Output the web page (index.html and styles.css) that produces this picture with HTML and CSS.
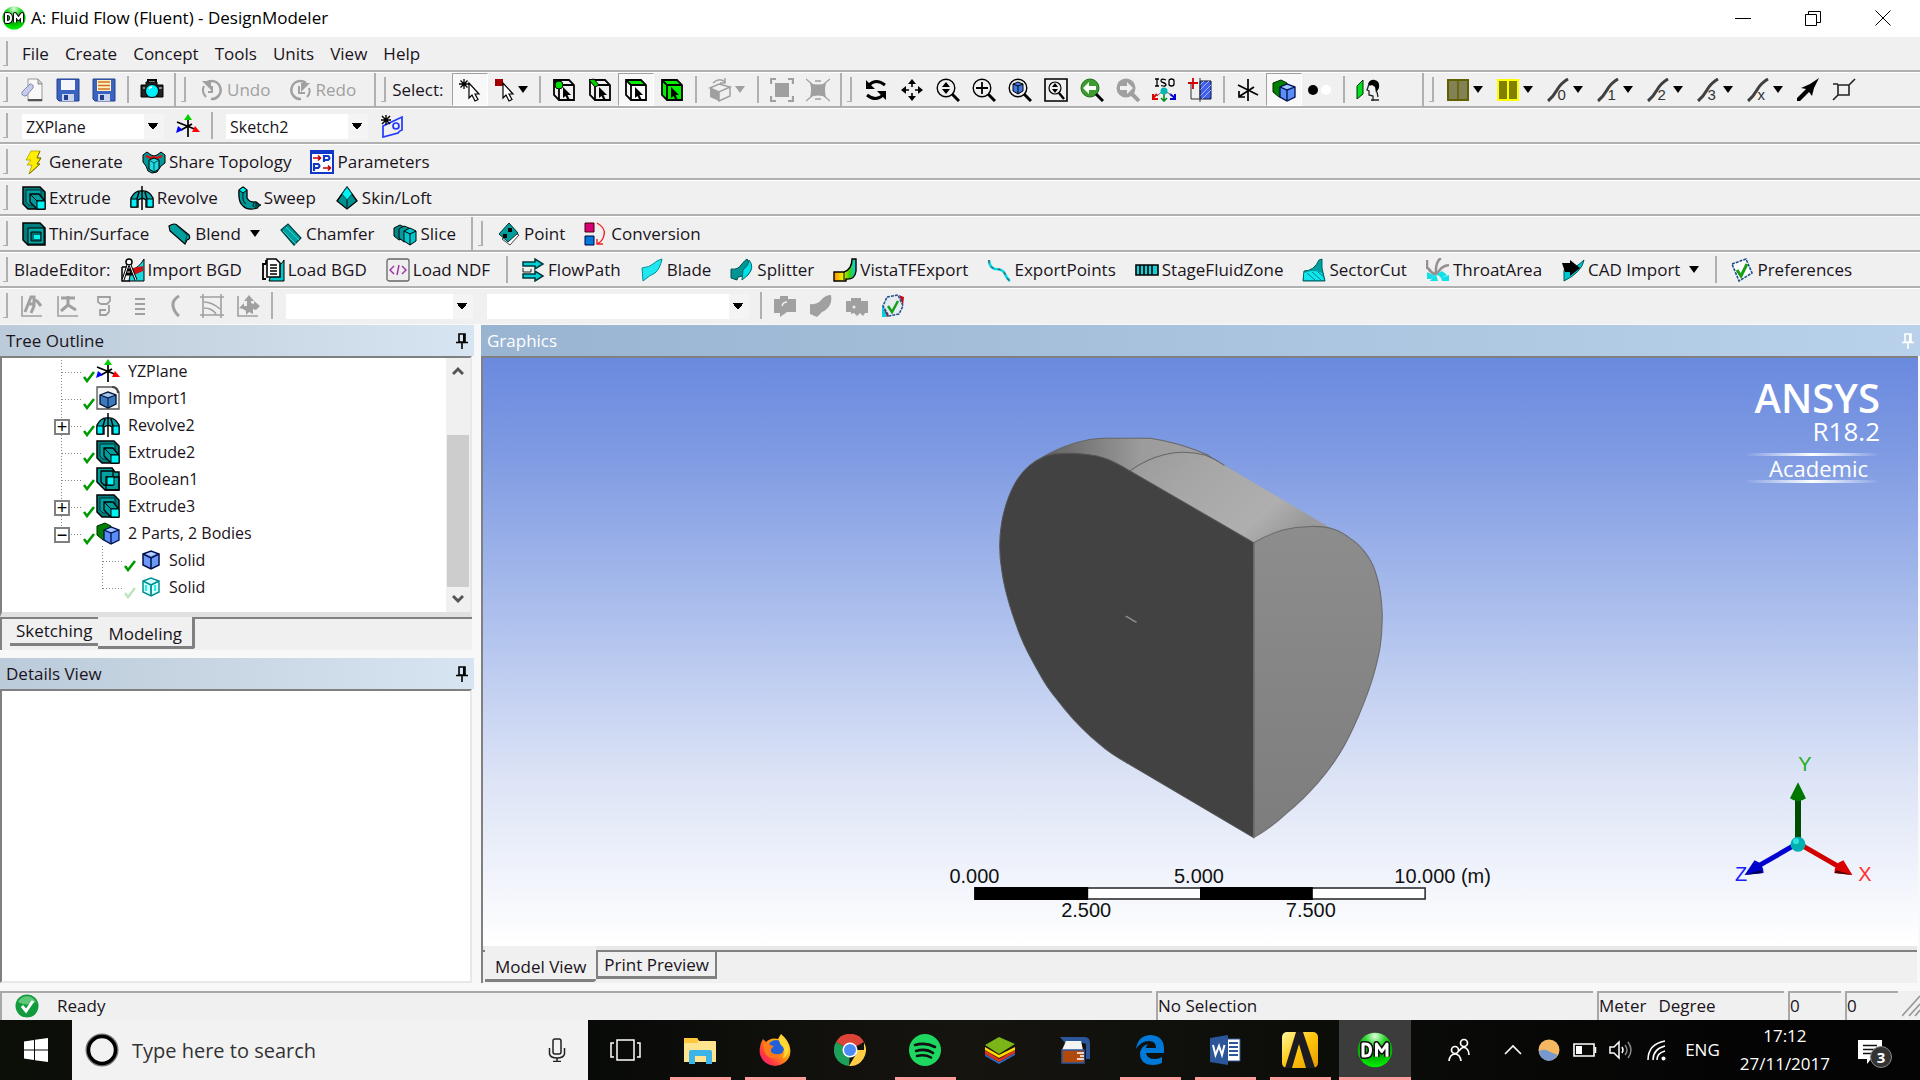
FILE: index.html
```html
<!DOCTYPE html>
<html lang="en">
<head>
<meta charset="utf-8">
<title>A: Fluid Flow (Fluent) - DesignModeler</title>
<link rel="stylesheet" href="styles.css">
</head>
<body>
<svg class="defs" aria-hidden="true">
<defs>
<radialGradient id="gGreen" cx=".5" cy=".1" r=".95"><stop offset="0" stop-color="#e0ffe0"/><stop offset=".3" stop-color="#30d830"/><stop offset=".6" stop-color="#00a800"/><stop offset="1" stop-color="#00ff00"/></radialGradient>
<linearGradient id="gTop" x1="0" y1="0" x2="1" y2=".5"><stop offset="0" stop-color="#9a9a9a"/><stop offset=".35" stop-color="#a6a6a6"/><stop offset=".8" stop-color="#afafaf"/><stop offset="1" stop-color="#9a9a9a"/></linearGradient>
<linearGradient id="gDome" x1="0" y1="0" x2="1" y2="0"><stop offset="0" stop-color="#606060"/><stop offset=".55" stop-color="#9c9c9c"/><stop offset="1" stop-color="#a2a2a2"/></linearGradient>
<linearGradient id="gSide" x1="0" y1="0" x2="0" y2="1"><stop offset="0" stop-color="#8d8d8d"/><stop offset="1" stop-color="#7d7d7d"/></linearGradient>
<linearGradient id="gFox" x1="1" y1="0" x2="0" y2="1"><stop offset="0" stop-color="#fff44f"/><stop offset=".45" stop-color="#ff980e"/><stop offset=".75" stop-color="#ff3647"/><stop offset="1" stop-color="#e31587"/></linearGradient>
<linearGradient id="gAns" x1="0" y1="0" x2="1" y2="1"><stop offset="0" stop-color="#fff9a0"/><stop offset=".5" stop-color="#ffc40c"/><stop offset="1" stop-color="#e89a00"/></linearGradient>
<linearGradient id="gVista" x1="0" y1="0" x2="1" y2="0"><stop offset="0" stop-color="#ff9000"/><stop offset=".4" stop-color="#f0f000"/><stop offset=".7" stop-color="#40d000"/><stop offset="1" stop-color="#00d0ff"/></linearGradient>
</defs>
<symbol id="dm" viewBox="0 0 24 24"><circle cx="12" cy="12" r="11.500" fill="url(#gGreen)"/><g fill="none" stroke-linejoin="round"><path d="M4 8v8h1.500q3.500 0 3.500-4T5.500 8zM13 16.500V8l3.500 5L20 8v8.500" stroke="#111" stroke-width="4"/><path d="M4 8v8h1.500q3.500 0 3.500-4T5.500 8zM13 16.500V8l3.500 5L20 8v8.500" stroke="#fff" stroke-width="2"/></g></symbol>
<symbol id="new" viewBox="0 0 24 24"><path d="M8 1h10l4 4v18H8z" fill="#f8f8f8" stroke="#999"/><path d="M18 1v5h4" fill="#ccc" stroke="#888"/><path d="M2 14L10 6q4 0 3 4L6 18q-5 0-4-4z" fill="#c5cdea" stroke="#8088b0"/><path d="M8 22h14" stroke="#555" stroke-width="2"/></symbol>
<symbol id="save" viewBox="0 0 24 24"><path d="M1 1h22v22H3l-2-2z" fill="#3a62c0" stroke="#223f8c"/><path d="M5 2h14v10H5z" fill="#f4f6fc"/><path d="M6 16h12v7H6z" fill="#c9d3ea"/><path d="M8 17h4v5H8z" fill="#223f8c"/></symbol>
<symbol id="saveas" viewBox="0 0 24 24"><path d="M1 1h22v22H3l-2-2z" fill="#3a62c0" stroke="#223f8c"/><path d="M5 2h14v11H5z" fill="#fff0c0"/><path d="M6 4h12M6 7.500h12M6 11h12" stroke="#d07020" stroke-width="1.500"/><path d="M6 16h12v7H6z" fill="#c9d3ea"/><path d="M8 17h4v5H8z" fill="#223f8c"/></symbol>
<symbol id="camera" viewBox="0 0 24 24"><path d="M1 7h5V4h11v3h6v12H1z" fill="#222" stroke="#000"/><path d="M8 4V2h8v2" fill="none" stroke="#000" stroke-width="2"/><circle cx="12" cy="13" r="6.500" fill="#00f0ff" stroke="#000"/><path d="M9 11q1-2 3-2" stroke="#fff" stroke-width="1.500" fill="none"/><path d="M3 10h2M19 10h3" stroke="#eee"/></symbol>
<symbol id="undo" viewBox="0 0 24 24"><path d="M6 5a9 9 0 1 1 5 16" fill="none" stroke="#a0a0a0" stroke-width="2.500"/><path d="M2 3h9v9z" fill="#a0a0a0"/><path d="M4 8q-3 6 2 11M12 8v6H8" fill="none" stroke="#a0a0a0" stroke-width="2"/></symbol>
<symbol id="redo" viewBox="0 0 24 24"><path d="M18 5a9 9 0 1 0-5 16" fill="none" stroke="#a0a0a0" stroke-width="2.500"/><path d="M22 5h-9v9z" fill="#a0a0a0"/><path d="M21 10q2 5-2 9M11 8v7h6" fill="none" stroke="#a0a0a0" stroke-width="2"/></symbol>
<symbol id="selnew" viewBox="0 0 24 24"><path d="M6 1v10M1 6h10M2.500 2.500l7 7M9.500 2.500l-7 7" stroke="#000" stroke-width="1.300"/><path d="M11 5v15l3-3 3 6 3-1.500-3-5.500h4z" fill="#fff" stroke="#000" stroke-width="1.200"/></symbol>
<symbol id="selmode" viewBox="0 0 24 24"><path d="M1 1h8v7H1z" fill="#a00000"/><path d="M9 5v15l3-3 3 6 3-1.500-3-5.500h4z" fill="#fff" stroke="#000" stroke-width="1.200"/></symbol>
<symbol id="cubeb" viewBox="0 0 24 24"><path d="M2 2h15l5 5v15H7l-5-5zM2 2l5 5v15M7 7h15" fill="none" stroke="#000" stroke-width="1.800"/></symbol>
<symbol id="cur" viewBox="0 0 24 24"><path d="M11 9v11l2.500-2 2 4 2-1-2-4H19z" fill="#000"/></symbol>
<symbol id="selpt" viewBox="0 0 24 24"><use href="#cubeb"/><circle cx="7" cy="7" r="4" fill="#00e000" stroke="#000"/><use href="#cur"/></symbol>
<symbol id="seledge" viewBox="0 0 24 24"><use href="#cubeb"/><path d="M1 2l5-1 5 6-4 2z" fill="#00d000" stroke="#000"/><use href="#cur"/></symbol>
<symbol id="selface" viewBox="0 0 24 24"><path d="M7 7h15v15H7z" fill="#fff"/><path d="M2 2h15l5 5H7z" fill="#00f000"/><use href="#cubeb"/><use href="#cur"/></symbol>
<symbol id="selbody" viewBox="0 0 24 24"><path d="M2 2h15l5 5v15H7l-5-5z" fill="#00f000"/><use href="#cubeb"/><use href="#cur"/></symbol>
<symbol id="extsel" viewBox="0 0 24 24"><path d="M2 10l9 4v9l-9-4z" fill="#a0a0a0"/><path d="M2 10l9-4 11 3-11 5zM11 14v9l11-5V9M5 5q6-6 12-1M17 0v5h-5" fill="none" stroke="#a0a0a0" stroke-width="1.500"/></symbol>
<symbol id="expand" viewBox="0 0 24 24"><path d="M5 5h14v14H5z" fill="#a0a0a0"/><path d="M1 6V1h5M18 1h5v5M23 18v5h-5M6 23H1v-5" fill="none" stroke="#a0a0a0" stroke-width="2.200"/></symbol>
<symbol id="shrink" viewBox="0 0 24 24"><path d="M4 5q8 3 16 0-2 7 0 14-8-3-16 0 2-7 0-14z" fill="#a0a0a0"/><path d="M0 1l6 5M24 1l-6 5M0 23l6-5M24 23l-6-5M9 3h6M9 21h6" stroke="#a0a0a0" stroke-width="1.300"/></symbol>
<symbol id="rotate" viewBox="0 0 24 24"><path d="M5 7q7-7 16 0M19 17Q12 24 3 17" fill="none" stroke="#000" stroke-width="3"/><path d="M2 2v9h9zM22 22v-9h-9z"/></symbol>
<symbol id="pan" viewBox="0 0 24 24"><path d="M12 3v6M12 15v6M3 12h6M15 12h6" stroke="#000" stroke-width="1.600"/><path d="M12 1l4 5H8zM12 23l4-5H8zM1 12l5-4v8zM23 12l-5-4v8z"/></symbol>
<symbol id="mag" viewBox="0 0 24 24"><circle cx="10" cy="10" r="8.800" fill="none" stroke="#000" stroke-width="1.400"/><path d="M16 16l7 7" stroke="#000" stroke-width="3"/></symbol>
<symbol id="zoom" viewBox="0 0 24 24"><use href="#mag"/><path d="M10 4l4 5H6zM10 16l4-5H6z"/></symbol>
<symbol id="boxzoom" viewBox="0 0 24 24"><use href="#mag"/><path d="M10 4v12M4 10h12" stroke="#000" stroke-width="1.800"/></symbol>
<symbol id="fit" viewBox="0 0 24 24"><use href="#mag"/><path d="M5 6l5-2 5 2v7l-5 3-5-3z" fill="#3c78e0" stroke="#000"/><path d="M5 6l5 2 5-2M10 8v8" fill="none" stroke="#000"/></symbol>
<symbol id="magwin" viewBox="0 0 24 24"><path d="M1 1h22v22H1z" fill="none" stroke="#000" stroke-width="1.600"/><circle cx="11" cy="10" r="6" fill="none" stroke="#000" stroke-width="1.200"/><path d="M15 15l5 6" stroke="#000" stroke-width="2.500"/><path d="M11 5l3 4H8zM11 15l3-4H8z"/></symbol>
<symbol id="prev" viewBox="0 0 24 24"><circle cx="10" cy="10" r="9" fill="#3c9c30" stroke="#1c6c18"/><path d="M16 16l7 7" stroke="#000" stroke-width="3"/><path d="M3 10l6-6v4h7v4H9v4z" fill="#fff"/></symbol>
<symbol id="next" viewBox="0 0 24 24"><circle cx="10" cy="10" r="9.500" fill="#a0a0a0"/><path d="M16 16l7 7" stroke="#a0a0a0" stroke-width="4"/><path d="M17 10l-6-6v4H4v4h7v4z" fill="#f0f0f0"/></symbol>
<symbol id="iso" viewBox="0 0 24 24"><path d="M3 1h4M5 1v7M3 8h4M14 2q-5-2-5 1 0 1 2 1.500t3 2q0 2.500-5 1M17 3q0-2 2.500-2T22 3v3q0 2-2.500 2T17 6z" fill="none" stroke="#000" stroke-width="1.300"/><path d="M12 14v8M9 20l3 3 3-3" stroke="#009020" stroke-width="1.600" fill="none"/><path d="M1 20l4-4M1 16v5h5" stroke="#d00" stroke-width="2" fill="none"/><path d="M23 20l-5-4M23 16v5h-5" stroke="#00c" stroke-width="2" fill="none"/><path d="M5 18q3-3 5-4M14 14q3 1 5 3" fill="none" stroke="#555"/><circle cx="12" cy="13" r="3.500" fill="#00b8b8"/></symbol>
<symbol id="lookat" viewBox="0 0 24 24"><path d="M12 3h11v18H12z" fill="#4060f0" stroke="#112" /><path d="M12 12l9-9M12 18L23 7M14 21l9-9M12 7l4-4" stroke="#a8b8ff"/><path d="M3 6v15h9M12 0v24" fill="none" stroke="#333"/><path d="M0 5h10M5 0v11" stroke="#d00000" stroke-width="1.800"/></symbol>
<symbol id="axes" viewBox="0 0 24 24"><path d="M12 1v22M2 7l20 10M18 9L4 18M3 13v6h6" fill="none" stroke="#000" stroke-width="1.700"/></symbol>
<symbol id="parts" viewBox="0 0 24 24"><path d="M1 5l8-3 6 3v12l-8 2-6-5z" fill="#008000" stroke="#002800"/><path d="M8 9l7-3 8 3v10l-8 4-7-4z" fill="#5c8cf8" stroke="#001048" stroke-width="1.300"/><path d="M8 9l7 3 8-3M15 12v11" fill="none" stroke="#001048" stroke-width="1.300"/><path d="M10 9l5-2 5 2-5 2z" fill="#a8c8ff"/></symbol>
<symbol id="points" viewBox="0 0 24 24"><circle cx="5" cy="12" r="5"/><circle cx="18" cy="12" r="5" fill="#fff"/></symbol>
<symbol id="look" viewBox="0 0 24 24"><path d="M1 8l6-6v14l-6 5z" fill="#00e020" stroke="#030"/><path d="M12 6q2-5 7-4 5 1 4 8l-3 5-1-6-3-2q-3 1-3 0z"/><path d="M13 6l-2 6 2 1v4l4 1v5M21 14l1 5M23 22h-8" fill="none" stroke="#222" stroke-width="1.300"/></symbol>
<symbol id="olive" viewBox="0 0 24 24"><path d="M2 2h20v20H2z" fill="#828255" stroke="#606000" stroke-width="2"/><path d="M12 2v20" stroke="#606000" stroke-width="1.500"/></symbol>
<symbol id="yellow" viewBox="0 0 24 24"><path d="M2 2h20v20H2z" fill="#808000" stroke="#ffff00" stroke-width="2"/><path d="M12 2v20" stroke="#ffff00" stroke-width="2"/></symbol>
<symbol id="slash" viewBox="0 0 24 24"><path d="M2 23Q7 19 11 12T22 1" fill="none" stroke="#404040" stroke-width="3"/></symbol>
<symbol id="arrow" viewBox="0 0 24 24"><path d="M1 20l9-9-5-1 9-4 9-6-5 10-2 8-3-4-9 9H1z"/></symbol>
<symbol id="vertex" viewBox="0 0 24 24"><path d="M6 7h11v10H6zM17 7l6-6M6 17l-5 5M1 6h5" fill="none" stroke="#222" stroke-width="1.600"/></symbol>
<symbol id="plane" viewBox="0 0 24 24"><path d="M12 3v20M1 8l20 8M16 10L5 16" stroke="#000" stroke-width="1.700"/><path d="M12 0l4 6H8z" fill="#00d000"/><path d="M24 18h-8l3-6z" fill="#f00"/><path d="M0 19l2-7 5 4z" fill="#00f"/></symbol>
<symbol id="sketch" viewBox="0 0 24 24"><path d="M3 12l19-9v13q-3 1-4 3L3 23z" fill="none" stroke="#2038ff" stroke-width="1.700"/><circle cx="16" cy="12" r="3" fill="none" stroke="#2038ff" stroke-width="1.700"/><path d="M6 1v10M1 6h10M2 2l8 8M10 2l-8 8" stroke="#000" stroke-width="1.400"/></symbol>
<symbol id="bolt" viewBox="0 0 24 24"><path d="M9 1h9l-3 7h4l-4 6h3L7 24l3-9H5l4-5H4z" fill="#ffee00" stroke="#b0a000" stroke-width=".8"/><path d="M18 1l-3 7h4l-4 6h3L7 24" fill="none" stroke="#777000"/></symbol>
<symbol id="share" viewBox="0 0 24 24"><path d="M1 5l4-3 4 3 3 1 3-1 4-3 4 3v8l-4 3-4 6-5 1-4-2-2-5-3-4z" fill="#009898" stroke="#000"/><path d="M4 6l5 2 3-1 3 1 5-2" stroke="#f00000" stroke-width="2" fill="none"/><path d="M7 10l5-2 5 2v9l-5 3-5-3z" fill="#20d8e0" stroke="#000"/><path d="M7 10l5 3 5-3M12 13v9" fill="none" stroke="#005050"/></symbol>
<symbol id="param" viewBox="0 0 24 24"><path d="M1 1h22v22H1z" fill="#fff" stroke="#1038c8" stroke-width="2"/><path d="M1 3h22" stroke="#1038c8" stroke-width="2"/><path d="M14 12V6h4q3 2 0 4h-4M4 21v-7h4q3 2 0 4H4" fill="none" stroke="#1038c8" stroke-width="2.200"/><path d="M3 8h7M8 5.500L10.500 8 8 10.500M13 18h7M18 15.500l2.500 2.500-2.500 2.500" fill="none" stroke="#c00000" stroke-width="1.600"/></symbol>
<symbol id="extrude" viewBox="0 0 24 24"><path d="M1 1h17l5 5v17H6l-5-5z" fill="#007c7c" stroke="#000" stroke-width="1.500"/><path d="M4 4h15v15H7l-3-3z" fill="#00a0a0" stroke="#003030"/><path d="M8 8h9l5 6v9h-7l-7-7z" fill="#009c9c" stroke="#000" stroke-width="1.300"/><path d="M8 8l7 7h7" fill="none" stroke="#000"/><path d="M15 15h8v8h-8z" fill="#00f4f4" stroke="#000"/></symbol>
<symbol id="revolve" viewBox="0 0 24 24"><path d="M1 21v-9q4-8 11-7 7-1 11 7v9h-7v-7q-3-3-8 0v7z" fill="#00a8b0" stroke="#000" stroke-width="1.400"/><path d="M1 13h6v8H1zM17 13h6v8h-6z" fill="#00f0f8" stroke="#000"/><path d="M7 13l2-7M17 13l-2-7M12 0v24" stroke="#000" stroke-width="1.500"/></symbol>
<symbol id="sweep" viewBox="0 0 24 24"><path d="M2 4l4-3 4 3v8q3 5 9 4l4 3-3 3q-9 3-14-2-5-4-4-16z" fill="#009c9c" stroke="#000" stroke-width="1.300"/><path d="M2 4l4-3 4 3-4 3z" fill="#00f0f0" stroke="#000"/><path d="M6 7q-1 9 3 11M17 16l3 2v4l-4-2zM18 19h6" fill="none" stroke="#003838" stroke-width="1.300"/></symbol>
<symbol id="skin" viewBox="0 0 24 24"><path d="M12 1l5 7 5 7-10 8L2 15l5-7z" fill="#009090" stroke="#000" stroke-width="1.300"/><path d="M12 1l5 7-5 6-5-6z" fill="#00f4f4" stroke="#005050"/><path d="M12 14v9" stroke="#003030" stroke-width="1.300"/></symbol>
<symbol id="thin" viewBox="0 0 24 24"><path d="M1 1h17l5 5v17H6l-5-5z" fill="#007c7c" stroke="#000" stroke-width="1.500"/><path d="M6 6h16v16H6z" fill="#00a8a8" stroke="#000"/><path d="M9 10h10v9H9z" fill="#006c6c" stroke="#000"/><path d="M12 13h6v4h-6z" fill="#00f4f4"/></symbol>
<symbol id="blend" viewBox="0 0 24 24"><path d="M1 4q6-4 9 0l11 9q2 4-2 5l-2 4L2 9z" fill="#00a0a0" stroke="#000" stroke-width="1.200"/><path d="M8 3l11 10-2 8" fill="none" stroke="#004848"/></symbol>
<symbol id="chamfer" viewBox="0 0 24 24"><path d="M2 8l7-6 13 14-7 7z" fill="#00a0a0" stroke="#004040" stroke-width="1.200"/><path d="M4 9l13 13M7 5l13 13" stroke="#30d0d0"/></symbol>
<symbol id="slice" viewBox="0 0 24 24"><path d="M1 6l6-3 4 2v11l-5 2-5-4z" fill="#008888" stroke="#000"/><path d="M6 7l5-3 5 2v12l-5 2-5-4z" fill="#009c9c" stroke="#000"/><path d="M11 9l6-3 6 3v10l-6 4-6-4z" fill="#00c8d0" stroke="#000"/><path d="M11 9l6 3 6-3M17 12v11" fill="none" stroke="#000"/></symbol>
<symbol id="point" viewBox="0 0 24 24"><path d="M13 23l-8-6 10-7 7 3z" fill="#fff" stroke="#444"/><path d="M12 1l9 10-10 9L2 12z" fill="#009c9c" stroke="#003030"/><path d="M11 6h4v4h-4zM6 12h4v4H6z"/></symbol>
<symbol id="conv" viewBox="0 0 24 24"><path d="M1 1h9v9H1z" fill="#d80078" stroke="#400"/><path d="M1 14h9v9H1z" fill="#0078d8" stroke="#004"/><path d="M13 1q9 5 7 12-1 6-7 9M13 17v5h6" fill="none" stroke="#f02020" stroke-width="1.400"/></symbol>
<symbol id="blade" viewBox="0 0 24 24"><path d="M2 10q8-1 11-4 4-4 9-5-2 10-7 14-5 2-12 8z" fill="#20e8f0" stroke="#009098"/></symbol>
<symbol id="impbgd" viewBox="0 0 24 24"><path d="M10 12Q18 10 23 1v22H8z" fill="#18d8e0" stroke="#000"/><path d="M12 10l10-2v5l-9 4z" fill="#d01010"/><path d="M1 9h4M1 9v14h8" stroke="#000" stroke-width="1.500" fill="none"/><circle cx="8" cy="4" r="3" fill="#fff" stroke="#000" stroke-width="1.500"/><path d="M7 7L2 22M9 7l6 15M4 16h9M5 12h7" stroke="#000" stroke-width="3"/><path d="M7 7L2 22M9 7l6 15" stroke="#fff" stroke-width="1"/></symbol>
<symbol id="loadbgd" viewBox="0 0 24 24"><path d="M12 10Q20 8 23 2v21H8z" fill="#00c8c8" stroke="#000"/><path d="M5 6H2v15h3M5 2v4" fill="none" stroke="#000" stroke-width="1.800"/><path d="M6 1h9l4 4v14H6z" fill="#fff" stroke="#000" stroke-width="1.600"/><path d="M9 7h7M9 10h7M9 13h7M9 16h7" stroke="#000" stroke-width="1.300"/></symbol>
<symbol id="ndf" viewBox="0 0 24 24"><rect x="1" y="1" width="22" height="22" rx="2" fill="#eee" stroke="#666" stroke-width="1.300"/><path d="M8 8l-4 4 4 4M16 8l4 4-4 4M13 7l-2 10" fill="none" stroke="#a030a0" stroke-width="1.400"/></symbol>
<symbol id="flow" viewBox="0 0 24 24"><path d="M2 4h12V1l8 5-8 5V8H2zM2 16h12v-3l8 5-8 5v-3H2z" fill="#00d0d8" stroke="#003838" stroke-width="1.500"/><path d="M2 10v4h8v-3" fill="none" stroke="#222"/></symbol>
<symbol id="splitter" viewBox="0 0 24 24"><path d="M1 11q7 1 10-4 4-5 6-6 6 8-4 17l-5 1-1 3-6-2z" fill="#009494" stroke="#005050"/><path d="M13 12q6-5 6-10 6 7-1 15l-6 5z" fill="#00e0e8" stroke="#006868"/></symbol>
<symbol id="vista" viewBox="0 0 24 24"><path d="M1 14h10q8-3 8-13h4v12q-1 9-10 8v2H1z" fill="url(#gVista)" stroke="#000" stroke-width="1.400"/><path d="M11 14v8" stroke="#000"/></symbol>
<symbol id="exppts" viewBox="0 0 24 24"><path d="M2 2q0 7 6 9 8 0 10 5t5 7" fill="none" stroke="#00d8e8" stroke-width="2.600"/><path d="M2 2q0 7 6 9 8 0 10 5t5 7" fill="none" stroke="#555" stroke-width="1.300" stroke-dasharray="3 4"/></symbol>
<symbol id="stage" viewBox="0 0 24 24"><path d="M1 7h22v10H1z" fill="#18d0d8" stroke="#000" stroke-width="1.600"/><path d="M5 7v10M9 7v10M13 7v10M17 7v10" stroke="#000" stroke-width="1.600"/></symbol>
<symbol id="sector" viewBox="0 0 24 24"><path d="M2 13q10 0 15-11l3-1v9l3 13H1z" fill="#00a0a0" stroke="#006060"/><path d="M2 15q9-4 18 0l2 7H2z" fill="#10e8f0"/><path d="M5 15l8 7M10 14l9 8M16 14l6 5" stroke="#008080"/></symbol>
<symbol id="throat" viewBox="0 0 24 24"><path d="M1 2v9M2 10q3 5 8 7M15 0q-6 4-5 17M23 7q-9 1-12 10" fill="none" stroke="#989090" stroke-width="2.600"/><path d="M9 18L1 14v7h4zM4 23l6-7 2 7zM11 16l5-3 5 4-6 3zM15 20l8-3v6h-7z" fill="#10e0e8"/></symbol>
<symbol id="cad" viewBox="0 0 24 24"><path d="M3 12q10 0 20-10-2 12-20 21z" fill="#00c8d0" stroke="#005858"/><path d="M1 5h8V2l10 8-10 8v-4H4z"/></symbol>
<symbol id="pref" viewBox="0 0 24 24"><path d="M2 6l14-5 6 14-13 8z" fill="#fff" stroke="#20508c" stroke-width="1.600" stroke-dasharray="3 1"/><path d="M7 12l4 6 6-12" fill="none" stroke="#18a018" stroke-width="3"/></symbol>
<symbol id="pref2" viewBox="0 0 24 24"><path d="M1 13l5 10 4-2zM18 1l5 2-1 9z" fill="#c01020"/><path d="M1 10v13h5z" fill="#00d0e0"/><path d="M6 3l11-2 5 11-4 8-10 2-6-10z" fill="#e4ecf0" stroke="#20508c" stroke-width="1.500" stroke-dasharray="3 1"/><path d="M7 12l4 6 6-11" fill="none" stroke="#18a018" stroke-width="2.500"/></symbol>
<symbol id="g1" viewBox="0 0 24 24"><path d="M2 2v20h20" fill="none" stroke="#a0a0a0" stroke-width="1.600"/><path d="M5 18L11 3h3v9l-3 7M14 6l3 1 4 5M8 10h6" fill="none" stroke="#a0a0a0" stroke-width="3"/></symbol>
<symbol id="g2" viewBox="0 0 24 24"><path d="M2 2v20h20" fill="none" stroke="#a0a0a0" stroke-width="1.600"/><path d="M5 4h14M12 2v9l-7 6M12 11l8 5" fill="none" stroke="#a0a0a0" stroke-width="3"/></symbol>
<symbol id="g3" viewBox="0 0 24 24"><path d="M6 3h12v4l-3 3H9L6 8zM17 11v7l-3 3H8v-5h6" fill="none" stroke="#a0a0a0" stroke-width="1.800"/></symbol>
<symbol id="g4" viewBox="0 0 24 24"><path d="M7 5h10M7 10h10M7 15h10M7 20h10" stroke="#a0a0a0" stroke-width="1.800"/></symbol>
<symbol id="g5" viewBox="0 0 24 24"><path d="M15 2Q8 6 9 12t6 10" fill="none" stroke="#a0a0a0" stroke-width="3"/></symbol>
<symbol id="g6" viewBox="0 0 24 24"><path d="M3 0v24M21 0v24M0 3h24M0 21h24M4 8q8 0 16 7M4 14q8 0 12 6" fill="none" stroke="#a0a0a0" stroke-width="1.600"/></symbol>
<symbol id="g7" viewBox="0 0 24 24"><path d="M2 2v20h20" fill="none" stroke="#a0a0a0" stroke-width="1.600"/><path d="M3 14l5-5v3h3V7H8l5-6 5 6h-3v2l3 1V7l6 5-4 4-3-1v5l-4-2-3 3v-4l-3-2z" fill="#a0a0a0"/></symbol>
<symbol id="g8" viewBox="0 0 24 24"><path d="M1 5h6V2h8v3h8v13h-9l-7 5v-4H1z" fill="#a0a0a0"/><path d="M9 12q1-4 5-4" stroke="#eee" stroke-width="1.500" fill="none"/></symbol>
<symbol id="g9" viewBox="0 0 24 24"><path d="M1 10q8 1 12-5 4-4 9-4 2 12-9 17l-5 5-7-3z" fill="#a0a0a0"/></symbol>
<symbol id="g10" viewBox="0 0 24 24"><path d="M1 7h5V4h10v3h7v12h-3l-2 3-3-3-3 3-3-3-3 1v-2H1z" fill="#a0a0a0"/><circle cx="9" cy="13" r="1.500" fill="#eee"/></symbol>
<symbol id="import" viewBox="0 0 24 24"><path d="M1 1h17l5 5v17H1z" fill="#f4f4f4" stroke="#555" stroke-width="1.300"/><path d="M4 9l8-3 8 3v9l-8 4-8-4z" fill="#3c78c0" stroke="#001030" stroke-width="1.300"/><path d="M4 9l8 3 8-3M12 12v10" fill="none" stroke="#001030"/><path d="M6 9l6-2 6 2-6 2z" fill="#a8c8e8"/><path d="M16 1q6 0 6 6" fill="none" stroke="#444" stroke-width="2"/></symbol>
<symbol id="bool" viewBox="0 0 24 24"><path d="M1 1h15l3 4h4v18H9l-8-8z" fill="#00a0a0" stroke="#000" stroke-width="1.500"/><path d="M5 4h12v14H8l-3-3zM10 10h13v13H10z" fill="none" stroke="#000" stroke-width="1.300"/><path d="M11 10h7v8h-7z" fill="#00f4f4" stroke="#000"/></symbol>
<symbol id="solid" viewBox="0 0 24 24"><path d="M6 6l8-3 8 3v11l-8 4-8-4z" fill="#6c98f8" stroke="#001048" stroke-width="1.500"/><path d="M6 6l8 4 8-4M14 10v11" fill="none" stroke="#001048" stroke-width="1.500"/><path d="M9 6l5-2 5 2-5 2z" fill="#b8d0ff"/></symbol>
<symbol id="solid2" viewBox="0 0 24 24"><path d="M6 6l8-3 8 3v11l-8 4-8-4z" fill="#d8ffff" stroke="#009090" stroke-width="1.500"/><path d="M6 6l8 4 8-4M14 10v11" fill="none" stroke="#009090" stroke-width="1.800"/><path d="M9 10v6M18 10v6" stroke="#20f0f0" stroke-width="2"/></symbol>
<symbol id="tick" viewBox="0 0 12 14"><path d="M1 8l3 4 7-9" fill="none" stroke="#009a00" stroke-width="2.600"/></symbol>
<symbol id="pin" viewBox="0 0 12 16"><path d="M3 1h6v8H3zM0 9.500h12M6 9.500V16" fill="none" stroke="currentColor" stroke-width="1.600"/><path d="M7 1h2v8H7z" fill="currentColor"/></symbol>
</svg>

<header class="title">
  <svg class="app" aria-hidden="true"><use href="#dm"/></svg>
  <h1>A: Fluid Flow (Fluent) - DesignModeler</h1>
  <div class="winbtns">
    <button aria-label="Minimize"><svg viewBox="0 0 16 16"><path d="M0 8.500h16"/></svg></button>
    <button aria-label="Restore"><svg viewBox="0 0 16 16"><path d="M.5 4.500h11v11H.5zM3.500 4V1.500h12v11H12"/></svg></button>
    <button aria-label="Close"><svg viewBox="0 0 16 16"><path d="M.5.5l15 15M15.500.5l-15 15"/></svg></button>
  </div>
</header>

<nav class="bar menu"><div class="group">
  <button>File</button><button>Create</button><button>Concept</button><button>Tools</button><button>Units</button><button>View</button><button>Help</button>
</div></nav>

<div class="bar">
  <div class="group">
    <button class="ib" aria-label="New"><svg><use href="#new"/></svg></button><button class="ib" aria-label="Save"><svg><use href="#save"/></svg></button><button class="ib" aria-label="Save as"><svg><use href="#saveas"/></svg></button><i class="sep"></i><button class="ib" aria-label="Capture"><svg><use href="#camera"/></svg></button>
  </div>
  <div class="group history">
    <button class="tb off" disabled><svg><use href="#undo"/></svg>Undo</button><button class="tb off" disabled><svg><use href="#redo"/></svg>Redo</button>
  </div>
  <div class="group">
    <span class="lead">Select:</span>
    <button class="ib on" aria-label="New selection"><svg><use href="#selnew"/></svg></button><button class="ib dd tight" aria-label="Selection mode"><svg><use href="#selmode"/></svg><i class="caret"></i></button><i class="sep"></i><button class="ib" aria-label="Points"><svg><use href="#selpt"/></svg></button><button class="ib" aria-label="Edges"><svg><use href="#seledge"/></svg></button><button class="ib on" aria-label="Faces"><svg><use href="#selface"/></svg></button><button class="ib" aria-label="Bodies"><svg><use href="#selbody"/></svg></button><i class="sep"></i><button class="ib dd off" disabled aria-label="Extend selection"><svg><use href="#extsel"/></svg><i class="caret"></i></button><i class="sep"></i><button class="ib" disabled aria-label="Expand"><svg><use href="#expand"/></svg></button><button class="ib" disabled aria-label="Shrink"><svg><use href="#shrink"/></svg></button>
  </div>
  <div class="group view">
    <button class="ib" aria-label="Rotate"><svg><use href="#rotate"/></svg></button><button class="ib" aria-label="Pan"><svg><use href="#pan"/></svg></button><button class="ib" aria-label="Zoom"><svg><use href="#zoom"/></svg></button><button class="ib" aria-label="Box zoom"><svg><use href="#boxzoom"/></svg></button><button class="ib" aria-label="Zoom to fit"><svg><use href="#fit"/></svg></button><button class="ib" aria-label="Magnifier"><svg><use href="#magwin"/></svg></button><button class="ib" aria-label="Previous view"><svg><use href="#prev"/></svg></button><button class="ib" disabled aria-label="Next view"><svg><use href="#next"/></svg></button><button class="ib" aria-label="Isometric"><svg><use href="#iso"/></svg></button><button class="ib" aria-label="Look at"><svg><use href="#lookat"/></svg></button><i class="sep"></i><button class="ib" aria-label="Display plane"><svg><use href="#axes"/></svg></button><button class="ib on" aria-label="Display model"><svg><use href="#parts"/></svg></button><button class="ib" aria-label="Display points"><svg><use href="#points"/></svg></button><i class="sep"></i><button class="ib" aria-label="Look at face"><svg><use href="#look"/></svg></button>
  </div>
  <div class="group">
    <button class="ib dd" aria-label="Face colour"><svg><use href="#olive"/></svg><i class="caret"></i></button><button class="ib dd" aria-label="Edge colour"><svg><use href="#yellow"/></svg><i class="caret"></i></button><button class="ib dd num"><svg><use href="#slash"/></svg><b>0</b><i class="caret"></i></button><button class="ib dd num"><svg><use href="#slash"/></svg><b>1</b><i class="caret"></i></button><button class="ib dd num"><svg><use href="#slash"/></svg><b>2</b><i class="caret"></i></button><button class="ib dd num"><svg><use href="#slash"/></svg><b>3</b><i class="caret"></i></button><button class="ib dd num"><svg><use href="#slash"/></svg><b>x</b><i class="caret"></i></button><button class="ib" aria-label="Edge direction"><svg><use href="#arrow"/></svg></button><button class="ib" aria-label="Vertices"><svg><use href="#vertex"/></svg></button>
  </div>
</div>

<div class="bar"><div class="group planes">
  <select aria-label="Plane"><option>ZXPlane</option></select>
  <button class="ib" aria-label="New plane"><svg><use href="#plane"/></svg></button><i class="sep"></i>
  <select aria-label="Sketch"><option>Sketch2</option></select>
  <button class="ib" aria-label="New sketch"><svg><use href="#sketch"/></svg></button>
</div></div>

<div class="bar"><div class="group">
  <button class="tb"><svg><use href="#bolt"/></svg>Generate</button><button class="tb"><svg><use href="#share"/></svg>Share Topology</button><button class="tb"><svg><use href="#param"/></svg>Parameters</button>
</div></div>

<div class="bar"><div class="group">
  <button class="tb"><svg><use href="#extrude"/></svg>Extrude</button><button class="tb"><svg><use href="#revolve"/></svg>Revolve</button><button class="tb"><svg><use href="#sweep"/></svg>Sweep</button><button class="tb"><svg><use href="#skin"/></svg>Skin/Loft</button>
</div></div>

<div class="bar">
  <div class="group">
    <button class="tb"><svg><use href="#thin"/></svg>Thin/Surface</button><button class="tb"><svg><use href="#blend"/></svg>Blend<i class="caret"></i></button><button class="tb"><svg><use href="#chamfer"/></svg>Chamfer</button><button class="tb"><svg><use href="#slice"/></svg>Slice</button>
  </div>
  <div class="group">
    <button class="tb"><svg><use href="#point"/></svg>Point</button><button class="tb"><svg><use href="#conv"/></svg>Conversion</button>
  </div>
</div>

<div class="bar"><div class="group editor">
  <span class="lead">BladeEditor:</span>
  <button class="tb"><svg><use href="#impbgd"/></svg>Import BGD</button><button class="tb"><svg><use href="#loadbgd"/></svg>Load BGD</button><button class="tb"><svg><use href="#ndf"/></svg>Load NDF</button><i class="sep"></i><button class="tb"><svg><use href="#flow"/></svg>FlowPath</button><button class="tb"><svg><use href="#blade"/></svg>Blade</button><button class="tb"><svg><use href="#splitter"/></svg>Splitter</button><button class="tb"><svg><use href="#vista"/></svg>VistaTFExport</button><button class="tb"><svg><use href="#exppts"/></svg>ExportPoints</button><button class="tb"><svg><use href="#stage"/></svg>StageFluidZone</button><button class="tb"><svg><use href="#sector"/></svg>SectorCut</button><button class="tb"><svg><use href="#throat"/></svg>ThroatArea</button><button class="tb"><svg><use href="#cad"/></svg>CAD Import<i class="caret"></i></button><i class="sep"></i><button class="tb"><svg><use href="#pref"/></svg>Preferences</button>
</div></div>

<div class="bar last"><div class="group blades">
  <button class="ib" disabled aria-label="Meridional"><svg><use href="#g1"/></svg></button><button class="ib" disabled aria-label="Layer"><svg><use href="#g2"/></svg></button><button class="ib" disabled aria-label="Contour"><svg><use href="#g3"/></svg></button><button class="ib" disabled aria-label="Stack"><svg><use href="#g4"/></svg></button><button class="ib" disabled aria-label="Camber"><svg><use href="#g5"/></svg></button><button class="ib" disabled aria-label="Section"><svg><use href="#g6"/></svg></button><button class="ib" disabled aria-label="Curve"><svg><use href="#g7"/></svg></button><i class="sep"></i>
  <select class="mid" aria-label="Blade"><option></option></select>
  <select class="wide" aria-label="Layer name"><option></option></select>
  <i class="sep"></i><button class="ib" disabled aria-label="Snapshot"><svg><use href="#g8"/></svg></button><button class="ib" disabled aria-label="Blade shape"><svg><use href="#g9"/></svg></button><button class="ib" disabled aria-label="Export shape"><svg><use href="#g10"/></svg></button><button class="ib" aria-label="Blade preferences"><svg><use href="#pref2"/></svg></button>
</div></div>

<main>
  <aside>
    <section class="panel">
      <h2>Tree Outline<svg class="pin"><use href="#pin"/></svg></h2>
      <div class="treebox">
        <ul class="tree">
          <li><span class="stem"></span><svg class="tick"><use href="#tick"/></svg><svg class="ic"><use href="#plane"/></svg>YZPlane</li>
          <li><span class="stem"></span><svg class="tick"><use href="#tick"/></svg><svg class="ic"><use href="#import"/></svg>Import1</li>
          <li><span class="stem"><button>+</button></span><svg class="tick"><use href="#tick"/></svg><svg class="ic"><use href="#revolve"/></svg>Revolve2</li>
          <li><span class="stem"></span><svg class="tick"><use href="#tick"/></svg><svg class="ic"><use href="#extrude"/></svg>Extrude2</li>
          <li><span class="stem"></span><svg class="tick"><use href="#tick"/></svg><svg class="ic"><use href="#bool"/></svg>Boolean1</li>
          <li><span class="stem"><button>+</button></span><svg class="tick"><use href="#tick"/></svg><svg class="ic"><use href="#extrude"/></svg>Extrude3</li>
          <li><span class="stem end"><button>−</button></span><svg class="tick"><use href="#tick"/></svg><svg class="ic"><use href="#parts"/></svg>2 Parts, 2 Bodies</li>
          <li class="child"><span class="stem"></span><svg class="tick"><use href="#tick"/></svg><svg class="ic"><use href="#solid"/></svg>Solid</li>
          <li class="child"><span class="stem end"></span><svg class="tick faint"><use href="#tick"/></svg><svg class="ic"><use href="#solid2"/></svg>Solid</li>
        </ul>
        <div class="scroll" aria-hidden="true">
          <svg viewBox="0 0 12 12"><path d="M1 9l5-5 5 5"/></svg><i></i><svg viewBox="0 0 12 12"><path d="M1 3l5 5 5-5"/></svg>
        </div>
      </div>
      <div class="tabs"><button>Sketching</button><button class="cur">Modeling</button></div>
    </section>
    <section class="panel grow">
      <h2>Details View<svg class="pin"><use href="#pin"/></svg></h2>
      <div class="empty"></div>
    </section>
  </aside>
  <section class="graphics">
    <h2>Graphics<svg class="pin"><use href="#pin"/></svg></h2>
    <div class="viewport">
      <svg class="scene" viewBox="482 357 1435 589" role="img" aria-label="Solid model with scale and axes">
        <g transform="translate(0 -13) scale(1 1.033)">
        <path d="M1040 455Q1072 437 1103 436H1149Q1178 440 1206 452L1224 463 1129 469 1088 452z" fill="url(#gDome)" stroke="#666"/>
        <path d="M1128.800 467.700Q1145 456 1164 451.700 1183 447 1204 452.300 1214 456 1223.400 462.300L1331 523.700 1300 530 1252.800 537.300z" fill="url(#gTop)"/>
        <path d="M1128.800 467.700Q1145 456 1164 451.700 1183 447 1204 452.300 1214 456 1223.400 462.300" fill="none" stroke="#666"/>
        <path d="M1252.800 537.300C1275 525 1290 522 1310 521.500 1330 521 1340 526 1349.700 533.300 1358 538 1370 551 1374.500 565 1379 578 1381 590 1381.500 605 1382 630 1379 645 1372.600 666.700 1367 685 1352 722 1338 743 1328 759 1308 782 1286.500 799Q1270 814 1252.800 823.300z" fill="url(#gSide)" stroke="#6a6a6a"/>
        <path d="M1252.800 537.300L1128.800 467.700C1110 457 1100 453 1087.500 452 1070 450 1056 450 1045 453 1032 458 1022 467 1016 476 1008 488 1002 506 1000 520 998 532 998 550 1000.300 563 1002 577 1008 600 1018.600 626.700 1024 640 1032 654 1039.700 666.700 1047 680 1055 688 1062.600 697.700 1073 710 1085 722 1099 733 1108 741 1119 747 1129.600 753L1252.800 823.300z" fill="#424242" stroke="#555"/>
        <path d="M1252.800 537.300v286" stroke="#707070"/>
        <path d="M1124.500 608.500l4 2 3 2 4 2" fill="none" stroke="#8a8a8a" stroke-width="1.500"/>
        </g>
        <path d="M973.500 888h451v11h-451z" fill="#fff" stroke="#222" stroke-width="1.500"/><path d="M973 887h114v13H973zM1199 887h113v13h-113z"/>
        <g class="scale"><text x="973" y="883">0.000</text><text x="1198" y="883">5.000</text><text x="1442" y="883">10.000 (m)</text><text x="1085" y="917">2.500</text><text x="1310" y="917">7.500</text></g>
        <path d="M1798 843V799" stroke="#004c00" stroke-width="6"/><path d="M1798 782l8 16q-8 6-16 0z" fill="#007800"/>
        <path d="M1798 843l40 23" stroke="#d00000" stroke-width="5"/><path d="M1852.500 875l-9-15q-9 3-9 13z" fill="#d80000"/><path d="M1852.500 875l-18-2 2-3z" fill="#500000"/>
        <path d="M1798 843l-40 23" stroke="#0000d0" stroke-width="5"/><path d="M1744.500 875l10-15q9 3 9 13z" fill="#0000c8"/><path d="M1744.500 875l18-2-2-3z" fill="#000050"/>
        <circle cx="1798" cy="844" r="7.500" fill="#00b0b0"/><circle cx="1796" cy="841" r="3" fill="#30e0e0"/>
        <g class="axis"><text class="y" x="1805" y="771">Y</text><text class="x" x="1865" y="881">X</text><text class="z" x="1741" y="881">Z</text></g>
      </svg>
      <div class="brand"><strong>ANSYS</strong><span>R18.2</span><em>Academic</em></div>
    </div>
    <div class="tabs"><button class="cur">Model View</button><button class="boxed">Print Preview</button></div>
  </section>
</main>

<footer class="status">
  <span class="cell first"><svg viewBox="0 0 24 24"><circle cx="12" cy="12" r="11.500" fill="#129a3c"/><path d="M3 8a10 10 0 0 1 18 0q-9 5-18 0" fill="#5cc878"/><path d="M7 12l4 5 7-10" fill="none" stroke="#fff" stroke-width="3"/></svg>Ready</span>
  <span class="cell sel">No Selection</span>
  <span class="cell units"><span>Meter</span><span>Degree</span></span>
  <span class="cell n">0</span><span class="cell n">0</span>
  <svg class="size" viewBox="0 0 18 24"><path d="M0 24L18 4M7 24L18 12M13 24l5-6" stroke="#999" stroke-width="1.800"/></svg>
</footer>

<footer class="task">
  <button class="start" aria-label="Start"><svg viewBox="0 0 24 24"><path d="M0 3.500L10 2v9.500H0zM11 1.800L24 0v11.500H11zM0 12.500h10V22L0 20.500zM11 12.500h13V24l-13-1.800z" fill="#fff"/></svg></button>
  <label class="search"><svg viewBox="0 0 34 34"><circle cx="17" cy="17" r="14.500" fill="none" stroke="#777" stroke-width="4"/><circle cx="17" cy="17" r="13.500" fill="none" stroke="#000" stroke-width="3.500"/></svg><input type="text" placeholder="Type here to search" aria-label="Search"><svg class="mic" viewBox="0 0 18 24"><rect x="5" y="1" width="8" height="15" rx="2" fill="none" stroke="#222" stroke-width="1.500"/><path d="M1.500 10v6q1 4 7.500 4t7.500-4v-6M9 20v3.500M5 23.500h8" fill="none" stroke="#222" stroke-width="1.500"/></svg></label>
  <div class="apps">
    <button aria-label="Task view"><svg viewBox="0 0 32 32"><path d="M8 6h17v20H8zM5 9H2v14h3M28 9h3v14h-3" fill="none" stroke="#fff" stroke-width="1.500"/></svg></button>
    <button class="run" aria-label="File Explorer"><svg viewBox="0 0 32 32"><path d="M0 5q0-1 1-1h12l2 3h16q1 0 1 1v20H0z" fill="#ffe490"/><path d="M0 5q0-1 1-1h12l2 3-2 2H0z" fill="#ffc83c"/><path d="M5 18q0-2 2-2h19q2 0 2 2v12h-6v-8H11v8H5z" fill="#3cb4e8"/></svg></button>
    <button class="run" aria-label="Firefox"><svg viewBox="0 0 32 32"><path d="M4 5l3 3q5-5 12-3l3-5q8 7 9 14 2 9-6 15-9 6-18 0Q-1 23 1 13q1-5 3-8z" fill="url(#gFox)"/><circle cx="17" cy="14" r="8" fill="#2060d8"/><path d="M5 8q5 0 6 3l4 1-3 3v3q4 4 11 1-4 7-13 4Q3 19 5 8z" fill="#ff7a18"/><path d="M21 2q8 7 9 14-3 8-6 8 4-9-2-13-3-4-1-9z" fill="#ffd830"/></svg></button>
    <button aria-label="Chrome"><svg viewBox="0 0 32 32"><path d="M16 16L2 8a16 16 0 0 1 28 0z" fill="#dc4437"/><path d="M16 16L2 8a16 16 0 0 0 13 24z" fill="#1ea05a"/><path d="M16 16h14V8.500A16 16 0 0 1 15 32l7-12z" fill="#ffce45"/><circle cx="16" cy="16" r="7.500" fill="#fff"/><circle cx="16" cy="16" r="6" fill="#4c8bf5"/></svg></button>
    <button class="run" aria-label="Spotify"><svg viewBox="0 0 32 32"><circle cx="16" cy="16" r="16" fill="#1ed760"/><path d="M6 11q11-3 20 2M7 17q10-3 17 2M8 22q8-2 14 1.500" fill="none" stroke="#101010" stroke-width="2.600" stroke-linecap="round"/></svg></button>
    <button aria-label="BlueStacks"><svg viewBox="0 0 32 32"><path d="M1 20l14 8 16-9v2l-16 9L1 22z" fill="#2070c8"/><path d="M1 16l14 9 16-9v3l-16 9-14-8z" fill="#e03020"/><path d="M1 13l14 8 16-8v3l-16 8-14-8z" fill="#ffd800"/><path d="M1 11L15 3l16 7-16 10z" fill="#7cb518"/></svg></button>
    <button aria-label="Coffee"><svg viewBox="0 0 32 32"><path d="M1 3h25q5 0 5 7v15h-4V11q0-2-3-2H6z" fill="#2b579a"/><path d="M7 7h15l2 9H3z" fill="#f4f4f4"/><path d="M3 16h22v13H3z" fill="#b04a0c" stroke="#2b579a" stroke-width="1.500"/><path d="M18 19h7M21 22h4M18 25h7" stroke="#fff" stroke-width="1.500"/></svg></button>
    <button class="run" aria-label="Edge"><svg viewBox="0 0 32 32"><path d="M2 15Q4 1 17 1q13 1 13 14v4H12q1 6 9 6 4 0 7-2v6q-4 2-9 2Q6 31 6 19q1-7 8-9-2 2-2 4h10q0-7-7-7-8 0-13 8z" fill="#0078d7"/></svg></button>
    <button class="run" aria-label="Word"><svg viewBox="0 0 32 32"><path d="M17 5h14v22H17z" fill="#fff" stroke="#2b579a"/><path d="M20 9h9M20 13h9M20 17h9M20 21h9" stroke="#2b579a" stroke-width="1.800"/><path d="M1 4l18-3v30L1 28z" fill="#2b579a"/><path d="M4 11l2.500 10L10 12l3 9 2.500-10" fill="none" stroke="#fff" stroke-width="2"/></svg></button>
    <button class="run" aria-label="ANSYS Workbench"><svg class="big" viewBox="0 0 36 36"><rect width="36" height="36" rx="5" fill="url(#gAns)"/><path d="M14 0h7l12 36h-9L17 12 10 36H3z" fill="#1c1c20"/></svg></button>
    <button class="run active" aria-label="DesignModeler"><svg class="big"><use href="#dm"/></svg></button>
  </div>
  <div class="tray">
    <svg viewBox="0 0 24 24"><g fill="none" stroke="#fff" stroke-width="1.700"><circle cx="17" cy="5" r="3.500"/><path d="M12 13q4-6 8-2 2 2 2 6"/><circle cx="8" cy="12" r="3.500"/><path d="M2 23q1-7 6-7t6 7"/></g></svg>
    <svg viewBox="0 0 24 24"><path d="M4 16l8-8 8 8" fill="none" stroke="#fff" stroke-width="1.600"/></svg>
    <svg viewBox="0 0 24 24"><circle cx="12" cy="12" r="10.500" fill="#f4b860"/><path d="M2 13q6-3 11 1l8 3q-8 10-16 3-3-3-3-7z" fill="#7898d0"/></svg>
    <svg viewBox="0 0 24 24"><path d="M1 6h20v12H1z" fill="none" stroke="#fff" stroke-width="1.600"/><path d="M3 8h6v8H3z" fill="#fff"/><path d="M22.500 9v6" stroke="#fff" stroke-width="1.500"/></svg>
    <svg viewBox="0 0 24 24"><path d="M1 9h4l5-5v16l-5-5H1z" fill="none" stroke="#fff" stroke-width="1.500"/><path d="M13 9q2 3 0 6" fill="none" stroke="#fff" stroke-width="1.500"/><path d="M16 7q4 5 0 10M19 4q6 8 0 16" fill="none" stroke="#888" stroke-width="1.500"/></svg>
    <svg viewBox="0 0 24 24"><g fill="none" stroke="#fff" stroke-width="1.500"><path d="M3 22Q3 6 20 3M8 22q0-11 12-14M12 22q0-7 8-9"/></g><circle cx="18.500" cy="20.500" r="2" fill="#fff"/></svg>
    <span class="lang">ENG</span>
    <time><span>17:12</span><span>27/11/2017</span></time>
    <button class="notes" aria-label="Notifications"><svg viewBox="0 0 24 24"><path d="M0 0h24v19H13l-4 5v-5H0z" fill="#fff"/><path d="M5 5.500h14M5 9.500h14M5 13.500h10" stroke="#111" stroke-width="1.500"/></svg><b>3</b></button>
  </div>
</footer>
</body>
</html>
```
FILE: styles.css
```css
* { box-sizing: border-box; }
html { height: 100%; }
body {
  margin: 0; min-height: 100vh; display: flex; flex-direction: column;
  background: #f0f0f0; color: #1a1420;
  font: 17px/24px "Open Sans", "Noto Sans", sans-serif;
}
button, input, select { font: inherit; color: inherit; border: 0; background: none; padding: 0; margin: 0; }
h1, h2, ul { margin: 0; padding: 0; font-weight: 400; list-style: none; }
.defs { position: absolute; width: 0; height: 0; }

/* Title bar */
.title { display: flex; align-items: center; height: 36px; padding-left: 2px; background: #fff; color: #000; }
.title .app { width: 24px; height: 24px; }
.title h1 { font-size: 17px; line-height: 24px; padding-left: 5px; }
.winbtns { margin-left: auto; display: flex; padding-right: 2px; }
.winbtns button { width: 70px; height: 36px; display: grid; place-items: center; }
.winbtns svg { width: 16px; height: 16px; fill: none; stroke: #000; stroke-width: 1; }

/* Toolbars */
.bar { display: flex; height: 36px; border-top: 1px solid #fff; border-bottom: 2px solid #b0b0b0; background: #f0f0f0; white-space: nowrap; }
.bar.last { border-bottom-color: #f0f0f0; }
.group { display: flex; align-items: center; }
.group::before { content: ""; align-self: stretch; width: 3px; margin: 4px 6px 4px 3px; border: 1px solid #b0b0b0; border-width: 0 2px 1px 0; }
.group:not(:last-child) { border-right: 2px solid #b0b0b0; padding-right: 4px; margin-right: 2px; }
.history:not(:last-child) { padding-right: 8px; }
.view:not(:last-child) { padding-right: 36px; }
.menu .group { gap: 16px; }
.menu .group::before { margin-right: -2px; }
.group svg { width: 24px; height: 24px; flex: none; }
.ib { width: 36px; height: 33px; display: flex; align-items: center; justify-content: center; flex: none; }
.ib.on { background: #f8f8f8; border: 1px solid #a0a0a0; border-right-color: #fff; border-bottom-color: #fff; }
.ib.dd { width: 50px; padding-left: 6px; justify-content: flex-start; gap: 3px; }
.ib.tight { width: 46px; gap: 0; }
.num { position: relative; }
.num b { position: absolute; left: 18px; top: 13px; font: 15px/18px "Liberation Sans", sans-serif; color: #333; }
.tb { display: flex; align-items: center; gap: 3px; height: 33px; padding: 0 11px 0 8px; }
.history .tb { padding-right: 10px; }
.caret { border: 5px solid transparent; border-top: 7px solid #000; border-bottom: 0; flex: none; }
.tb .caret { margin-left: 6px; }
.off { color: #a0a0a0; }
.off .caret { border-top-color: #a0a0a0; }
.sep { width: 2px; height: 27px; margin: 0 5px; background: #b0b0b0; flex: none; }
.lead { padding-right: 8px; }
.editor .lead { padding-right: 2px; }
select {
  appearance: none; width: 142px; height: 25px; padding-left: 4px; font-size: 16px; line-height: 24px;
  background:
    conic-gradient(from -39deg at 50% 100%, #000 78deg, transparent 0) no-repeat right 5px center / 12px 7px,
    linear-gradient(90deg, #fff calc(100% - 20px), #f4f4f4 0);
}
.planes select, .blades select { margin: 2px 6px 0 8px; }
select.mid { width: 187px; }
select.wide { width: 262px; }

/* Work area */
main { flex: 1; display: flex; gap: 7px; padding: 1px 0 8px; background: #f8f8f8; }
aside { width: 474px; flex: none; display: flex; flex-direction: column; gap: 8px; }
h2 { display: flex; align-items: center; justify-content: space-between; height: 31px; padding: 0 6px; font-size: 17px; line-height: 24px; background: linear-gradient(90deg, #bccbd9, #d7e4f2); }
.pin { width: 12px; height: 16px; color: #000; }
.grow { flex: 1; display: flex; flex-direction: column; }
.treebox { display: flex; margin-right: 2px; border: 2px solid #808080; border-right-color: #e8e8e8; border-bottom: 5px solid #e0e0e0; background: #fff; height: 261px; overflow: hidden; }
.tree { flex: 1; font-size: 16px; line-height: 24px; margin-top: -1px; }
.tree li { display: flex; align-items: center; height: 27px; padding-left: 48px; }
.tree .child { padding-left: 89px; }
.stem { align-self: stretch; width: 33px; display: flex; align-items: center; padding-left: 4px;
  background: repeating-linear-gradient(#888 0 1px, transparent 1px 3px) 11px 0 / 1px 100% no-repeat, repeating-linear-gradient(90deg, #888 0 1px, transparent 1px 3px) 12px 15px / 20px 1px no-repeat; }
.stem.end { background-size: 1px 16px, 20px 1px; }
.stem button { width: 16px; height: 16px; border: 2px solid #808080; background: #fff; color: #000; font: 18px/12px "Liberation Sans", sans-serif; margin-top: 4px; display: grid; place-items: center; }
.tick { width: 12px; height: 14px; margin-top: 10px; }
.faint { opacity: .25; }
.ic { width: 24px; height: 24px; margin: 0 8px 0 1px; }
.scroll { width: 24px; background: #f0f0f0; display: flex; flex-direction: column; align-items: center; justify-content: space-between; padding: 7px 0; }
.scroll svg { width: 12px; height: 12px; fill: none; stroke: #555; stroke-width: 3; }
.scroll i { width: 22px; height: 152px; margin: 52px 0 0; background: #cdcdcd; }
.tabs { display: flex; align-items: flex-start; height: 33px; padding-left: 8px; background: #f0f0f0; border-left: 2px solid #808080; font-size: 17px; }
.tabs button { height: 29px; padding: 0 6px; line-height: 28px; border-bottom: 3px solid #808080; }
.tabs .cur { height: 32px; padding: 0 10px; line-height: 34px; border-right: 3px solid #808080; border-radius: 0 0 3px 0; }
.panel .tabs { background: linear-gradient(#808080, #808080) 0 0 / 100% 2px no-repeat, #f0f0f0; margin-right: 2px; }
.panel .cur { background: #f0f0f0; }
.empty { flex: 1; margin-right: 2px; background: #fff; border: 2px solid #808080; border-right-color: #e8e8e8; border-bottom-color: #e8e8e8; }
.graphics { flex: 1; min-width: 0; display: flex; flex-direction: column; }
.graphics h2 { color: #fff; background: linear-gradient(90deg, #99b4d1, #b9d1ea); }
.graphics .pin { color: #fff; }
.viewport { position: relative; flex: 1; min-height: 300px; margin-right: 2px; border-top: 2px solid #808080; border-left: 2px solid #808080; background: linear-gradient(#6a8adf, #7e9ae2 16%, #b4c5ee 48%, #dde4f6 72%, #fff); }
.scene { position: absolute; inset: 0; width: 100%; height: 100%; }
.scale, .axis { font: 20px "Liberation Sans", sans-serif; text-anchor: middle; fill: #111; }
.axis .y { fill: #20b020; }
.axis .x { fill: #ff3030; }
.axis .z { fill: #2020ff; }
.brand { position: absolute; top: 19px; right: 38px; color: #fff; text-align: right; display: flex; flex-direction: column; }
.brand strong { font-size: 40px; line-height: 42px; font-weight: 600; }
.brand span { font-size: 26px; line-height: 24px; }
.brand em { margin-top: 10px; padding: 0 12px 0 24px; font-style: normal; font-size: 22px; line-height: 30px; align-self: flex-end;
  background: linear-gradient(90deg, transparent, #fff, transparent) 0 0 / 100% 3px no-repeat, linear-gradient(90deg, transparent, #fff, transparent) 0 100% / 100% 3px no-repeat; }
.graphics .tabs { height: 37px; padding: 0 0 0 2px; margin-right: 3px; background: linear-gradient(#e8e8e8 4px, #808080 0 6px, #f0f0f0 0); }
.graphics .tabs .cur { height: 36px; padding: 0 10px; line-height: 42px; background: #f0f0f0; border-right: 0; }
.graphics .tabs .boxed { height: 29px; margin-top: 4px; line-height: 26px; border: 2px solid #808080; border-bottom-width: 3px; }

/* Status bar */
.status { display: flex; height: 29px; gap: 4px; background: #f0f0f0; }
.cell { display: flex; align-items: center; border: 2px solid #a8a8a8; border-width: 2px 0 0 2px; padding-bottom: 2px; font-size: 17px; }
.first { flex: 1; padding-left: 13px; gap: 18px; }
.first svg { width: 24px; height: 24px; }
.sel { width: 437px; }
.units { width: 187px; gap: 12px; }
.n { width: 53px; }
.size { width: 18px; height: 26px; }

/* Taskbar */
.task { display: flex; height: 60px; color: #fff; background: linear-gradient(90deg, #0c0e08, #080a08 30%, #16140f 50%, #0b0d09 70%, #040404 90%); }
.start { width: 72px; display: grid; place-items: center; }
.start svg { width: 24px; height: 24px; }
.search { width: 516px; display: flex; align-items: center; background: #f2f2f2; padding: 0 22px 0 13px; gap: 13px; }
.search svg { width: 34px; height: 34px; flex: none; }
.search .mic { width: 18px; height: 24px; }
.search input { flex: 1; min-width: 0; padding-top: 2px; font-size: 20px; line-height: 28px; color: #333; outline: 0; }
.search input::placeholder { color: #333; opacity: 1; }
.apps { display: flex; gap: 3px; padding-left: 1px; }
.apps button { width: 72px; height: 60px; display: grid; place-items: center; }
.apps svg { width: 32px; height: 32px; }
.apps .big { width: 36px; height: 36px; }
.run { background: linear-gradient(#ff9c9c, #ff9c9c) center bottom / 61px 3px no-repeat; }
.run.active { background: linear-gradient(#ff9c9c, #ff9c9c) center bottom / 100% 3px no-repeat, #3c3c3c; }
.tray { margin-left: auto; display: flex; align-items: center; gap: 12px; padding-right: 28px; }
.tray svg { width: 24px; height: 24px; }
.tray svg:first-child { margin-right: 18px; }
.lang { font-size: 17px; padding-left: 4px; }
time { display: flex; flex-direction: column; align-items: center; font-size: 17px; line-height: 28px; margin: 0 16px 0 8px; }
.notes { position: relative; width: 34px; height: 36px; }
.notes svg { display: block; margin-top: 3px; }
.notes b { position: absolute; right: 0; bottom: 0; width: 22px; height: 22px; border: 1px solid #888; border-radius: 50%; background: #333; font-size: 15px; line-height: 20px; }
```
